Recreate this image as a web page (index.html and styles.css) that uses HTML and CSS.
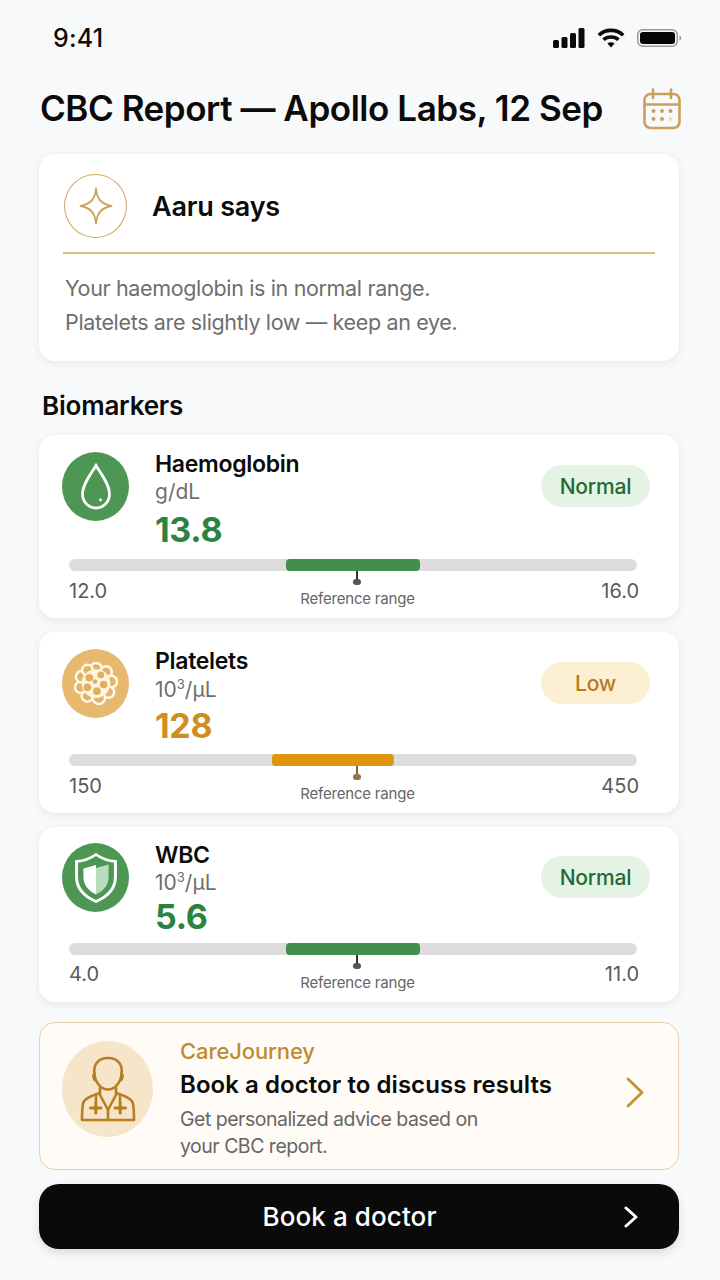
FILE: index.html
```html
<!DOCTYPE html>
<html lang="en">
<head>
<meta charset="utf-8">
<title>CBC Report</title>
<link rel="stylesheet" href="styles.css">
</head>
<body>
<main class="page">
  <header class="status">
    <span class="time">9:41</span>
    <span class="status-icons">
      <svg class="ic-signal" width="32" height="20" viewBox="0 0 32 20"><rect x="0" y="12" width="6" height="8" rx="1.5"/><rect x="8.500" y="9" width="6" height="11" rx="1.500"/><rect x="17" y="5" width="6" height="15" rx="1.500"/><rect x="25.500" y="0" width="6" height="20" rx="1.500"/></svg>
      <svg class="ic-wifi" width="28" height="20" viewBox="0 0 28 20" fill="none" stroke="#0a0a0a" stroke-width="3.600"><path d="M1.800 7.200C8.500 .8 19.500 .8 26.200 7.200"/><path d="M6.500 11.800C10.600 8 17.400 8 21.500 11.800"/><path d="M14 19.500 10.400 15.500C12.400 13.800 15.600 13.800 17.600 15.500Z" fill="#0a0a0a" stroke="none"/></svg>
      <svg class="ic-batt" width="44" height="18" viewBox="0 0 44 18"><rect x=".75" y=".75" width="39.500" height="16.500" rx="5" fill="none" stroke="#9a9a9a" stroke-width="1.500"/><rect x="3" y="3" width="35" height="12" rx="3" fill="#050505"/><path d="M42.500 6.500C43.600 7 44 8 44 9S43.600 11 42.500 11.500Z" fill="#8a8a8a"/></svg>
    </span>
  </header>

  <div class="title-row">
    <h1 class="title">CBC Report — Apollo Labs, 12 Sep</h1>
    <svg class="ic-cal" width="38" height="42" viewBox="0 0 38 42" fill="none" stroke="#cba05a" stroke-width="2.600" stroke-linecap="round"><rect x="1.500" y="6" width="35" height="34" rx="6"/><path d="M1.500 16.500H36.500M10 1.500V10M28 1.500V10"/><g fill="#cba05a" stroke="none"><circle cx="10.500" cy="23" r="2"/><circle cx="19" cy="23" r="2"/><circle cx="27.500" cy="23" r="2"/><circle cx="10.500" cy="31" r="2"/><circle cx="19" cy="31" r="2"/><circle cx="27.500" cy="31" r="2" opacity=".3"/></g></svg>
  </div>

  <section class="card aaru">
    <div class="aaru-head">
      <span class="aaru-badge">
        <svg width="34" height="38" viewBox="0 0 34 38" fill="none" stroke="#cba05a" stroke-width="1.800" stroke-linejoin="round"><path d="M17 1.500C18 12 22 17 32.500 19 22 21 18 26 17 36.500 16 26 12 21 1.500 19 12 17 16 12 17 1.500Z"/></svg>
      </span>
      <h2 class="aaru-name">Aaru says</h2>
    </div>
    <div class="aaru-rule"></div>
    <p class="aaru-text">Your haemoglobin is in normal range.<br>Platelets are slightly low — keep an eye.</p>
  </section>

  <h2 class="section-title">Biomarkers</h2>

  <article class="card bio bio-hb">
    <div class="bio-top">
      <span class="bio-icon green">
        <svg width="32" height="48" viewBox="0 0 32 48" fill="none" stroke="#fff" stroke-width="2.800"><path d="M16 2.500C11 11 2.500 21 2.500 31A13.500 14 0 0 0 29.500 31C29.500 21 21 11 16 2.500Z"/><circle cx="20.500" cy="37" r="1.400" fill="#fff" stroke="none"/></svg>
      </span>
      <div class="bio-text">
        <h3 class="bio-name">Haemoglobin</h3>
        <div class="bio-unit">g/dL</div>
        <div class="bio-value val-green">13.8</div>
      </div>
      <span class="pill pill-green">Normal</span>
    </div>
    <div class="track">
      <div class="fill fill-green" style="left:38.200%;width:23.600%"></div>
      <div class="tick"></div>
    </div>
    <div class="foot"><span>12.0</span><span class="ref">Reference range</span><span class="foot-end">16.0</span></div>
  </article>

  <article class="card bio bio-pl">
    <div class="bio-top">
      <span class="bio-icon gold">
        <svg width="44" height="45" viewBox="0 0 46 46" fill="#e3b468" stroke="#fff8ea" stroke-width="2.600"><circle cx="23" cy="8" r="6.500"/><circle cx="33.500" cy="11" r="6"/><circle cx="39" cy="21" r="6"/><circle cx="36" cy="32" r="6"/><circle cx="26" cy="38" r="6.500"/><circle cx="14" cy="36" r="6"/><circle cx="7" cy="27" r="6"/><circle cx="8" cy="16" r="6"/><circle cx="14" cy="9" r="5.500"/><circle cx="23" cy="23" r="15" stroke="none" fill="#fff4dc"/><g stroke="none" fill="#e0ae60"><circle cx="16" cy="17" r="4"/><circle cx="28" cy="14" r="3.500"/><circle cx="31" cy="24" r="4"/><circle cx="24" cy="31" r="4"/><circle cx="14" cy="27" r="4"/><circle cx="22" cy="21" r="2.500"/></g></svg>
      </span>
      <div class="bio-text">
        <h3 class="bio-name">Platelets</h3>
        <div class="bio-unit">10<sup class="sup">3</sup>/µL</div>
        <div class="bio-value val-gold">128</div>
      </div>
      <span class="pill pill-gold">Low</span>
    </div>
    <div class="track">
      <div class="fill fill-gold" style="left:35.700%;width:21.500%"></div>
      <div class="tick tick-gold"></div>
    </div>
    <div class="foot"><span>150</span><span class="ref">Reference range</span><span class="foot-end">450</span></div>
  </article>

  <article class="card bio bio-wb">
    <div class="bio-top">
      <span class="bio-icon green">
        <svg width="42" height="50" viewBox="0 0 40 50" preserveAspectRatio="none"><path d="M20 1.500C26 6 32 8 38.500 8.500V24C38.500 36 30 44 20 48.500 10 44 1.500 36 1.500 24V8.500C8 8 14 6 20 1.500Z" fill="none" stroke="#fff" stroke-width="2.800"/><path d="M20 12 8 15.500V24C8 32 13 38 20 41.500Z" fill="#fff"/><path d="M20 15 32 11.500V24C32 32 27 38 20 41.500Z" fill="#b9dcbc"/></svg>
      </span>
      <div class="bio-text">
        <h3 class="bio-name">WBC</h3>
        <div class="bio-unit">10<sup class="sup">3</sup>/µL</div>
        <div class="bio-value val-green">5.6</div>
      </div>
      <span class="pill pill-green">Normal</span>
    </div>
    <div class="track">
      <div class="fill fill-green" style="left:38.200%;width:23.600%"></div>
      <div class="tick"></div>
    </div>
    <div class="foot"><span>4.0</span><span class="ref">Reference range</span><span class="foot-end">11.0</span></div>
  </article>

  <section class="care">
    <span class="care-icon">
      <svg width="56" height="66" viewBox="0 0 56 66" fill="none" stroke="#b57f20" stroke-width="2.600" stroke-linecap="round" stroke-linejoin="round"><path d="M14.500 18C13 9 18 2 28 2S43 9 41.500 18C41 26 35 33.500 28 33.500S15 26 14.500 18Z"/><path d="M14.500 17.500C13 18.500 13 23 15.500 24.500M41.500 17.500C43 18.500 43 23 40.500 24.500"/><path d="M20 32V37C14 39 6 41 3.500 46 2 50 2 58 2 64H54C54 58 54 50 52.500 46 50 41 42 39 36 37V32"/><path d="M19 37 28 54 37 37M28 54V64"/><path d="M16 40V47M40 40V47"/><path d="M10.500 52H21M15.800 47V57M35 52H45.500M40.200 47V57" stroke-width="3"/></svg>
    </span>
    <div class="care-body">
      <div class="care-kicker">CareJourney</div>
      <h2 class="care-title">Book a doctor to discuss results</h2>
      <p class="care-sub">Get personalized advice based on<br>your CBC report.</p>
    </div>
    <svg class="care-chev" width="18" height="31" viewBox="0 0 18 31" fill="none" stroke="#c4922e" stroke-width="2.800" stroke-linecap="round" stroke-linejoin="round"><path d="M2 2 16 15.500 2 29"/></svg>
  </section>

  <button class="cta" type="button">
    <span class="cta-label">Book a doctor</span>
    <svg width="14" height="22" viewBox="0 0 14 22" fill="none" stroke="#fff" stroke-width="3" stroke-linecap="round" stroke-linejoin="round"><path d="M2 2 12 11 2 20"/></svg>
  </button>
</main>
</body>
</html>
```

FILE: styles.css
```css
* { box-sizing: border-box; }
html, body { margin: 0; padding: 0; }
body {
  width: 720px;
  height: 1280px;
  overflow: hidden;
  background: #f8f9fb;
  font-family: Inter, "Liberation Sans", sans-serif;
  color: #0b0b0b;
}
h1, h2, h3, p { margin: 0; font: inherit; }
.page { display: flex; flex-direction: column; padding: 0 41px 0 39px; }

.status {
  height: 76px;
  display: flex;
  align-items: center;
  justify-content: space-between;
  margin-right: -2px;
  padding-left: 14px;
}
.time { font-size: 25px; font-weight: 500; letter-spacing: .2px; }
.status-icons { display: flex; align-items: center; gap: 12px; }
.ic-signal { fill: #0a0a0a; }

.title-row {
  height: 64px;
  display: flex;
  align-items: center;
  justify-content: space-between;
  margin-right: -2px;
  padding-left: 1px;
}
.title { font-size: 35px; font-weight: 600; letter-spacing: -.45px; white-space: nowrap; }
.ic-cal { margin-top: 1px; }

.card {
  background: #fff;
  border-radius: 16px;
  box-shadow: 0 2px 8px rgba(30, 40, 60, .09);
}
.aaru { margin-top: 14px; padding: 20px 24px 22px; }
.aaru-head { display: flex; align-items: center; gap: 25px; padding-left: 1px; }
.aaru-badge {
  width: 63px;
  height: 64px;
  border: 1.5px solid #cfa562;
  border-radius: 50%;
  display: flex;
  align-items: center;
  justify-content: center;
}
.aaru-name { font-size: 27px; font-weight: 600; letter-spacing: -.2px; }
.aaru-rule { height: 2px; margin-top: 14px; background: #e2bd80; }
.aaru-text { margin-top: 17px; padding-left: 2px; font-size: 21.5px; letter-spacing: -.35px; line-height: 34px; color: #6e6e6e; }

.section-title { margin-top: 28px; padding-left: 3px; font-size: 26px; font-weight: 600; letter-spacing: -.2px; line-height: 34px; }

.bio { padding: 15px 29px 0 30px; height: 183px; }
.section-title + .bio { margin-top: 12px; }
.bio-pl { margin-top: 14px; height: 181px; }
.bio-wb { margin-top: 14px; height: 175px; padding-top: 14px; }
.bio-top { display: flex; align-items: flex-start; margin-left: -7px; }
.bio-icon {
  flex: none;
  width: 67px;
  height: 69px;
  margin-top: 2px;
  border-radius: 50%;
  display: flex;
  align-items: center;
  justify-content: center;
}
.green { background: #4e9654; }
.gold { background: #e6b96f; }
.bio-text { flex: 1; margin-left: 26px; }
.bio-name { font-size: 23px; font-weight: 600; letter-spacing: -.3px; line-height: 28px; }
.bio-unit { font-size: 21px; line-height: 28px; color: #6f6f6f; }
.sup { font-size: 13px; line-height: 0; }
.bio-value { font-size: 34px; font-weight: 700; letter-spacing: -.3px; line-height: 48px; }
.bio-pl .bio-unit { margin-top: 1px; }
.bio-pl .bio-value { line-height: 43px; margin-bottom: 2px; }
.bio-wb .bio-value { line-height: 39px; margin-bottom: 2px; }
.val-green { color: #2c8341; }
.val-gold { color: #cf8d22; }

.pill {
  flex: none;
  width: 109px;
  height: 42px;
  margin-top: 15px;
  border-radius: 21px;
  display: flex;
  align-items: center;
  justify-content: center;
  font-size: 21px;
  font-weight: 500;
  letter-spacing: -.2px;
}
.pill-green { background: #e4f3e3; color: #1f6a35; }
.pill-gold { background: #fdefd2; color: #b9791d; }

.track {
  position: relative;
  height: 12px;
  margin-top: 5px;
  margin-right: 13px;
  border-radius: 6px;
  background: #dcdcdc;
}
.fill { position: absolute; top: 0; bottom: 0; border-radius: 4px; }
.fill-green { background: #418f4b; }
.fill-gold { background: #e0950f; }
.tick {
  position: absolute;
  left: 287px;
  top: 12px;
  width: 2px;
  height: 8px;
  background: #333;
}
.tick::after {
  content: "";
  position: absolute;
  left: -3px;
  top: 8px;
  width: 8px;
  height: 6px;
  border-radius: 3px;
  background: #555;
}
.tick-gold { background: #8c6324; }
.tick-gold::after { background: #8d7550; }

.foot {
  display: grid;
  grid-template-columns: 1fr auto 1fr;
  margin-right: 11px;
  padding-top: 8px;
  font-size: 20px;
  line-height: 24px;
  color: #5a5a5a;
}
.foot-end { text-align: right; }
.ref { margin: 10px 0 0 7px; font-size: 15px; letter-spacing: -.2px; line-height: 20px; color: #666; }
.bio-wb .foot { padding-top: 7px; }
.bio-wb .ref { margin-top: 11px; }

.care {
  margin-top: 20px;
  height: 148px;
  display: flex;
  align-items: flex-start;
  padding: 0 34px 0 22px;
  background: #fffcf8;
  border: 1.5px solid #e7d1aa;
  border-radius: 16px;
}
.care-icon {
  flex: none;
  width: 91px;
  height: 96px;
  margin-top: 17.5px;
  border-radius: 50%;
  background: #f6e5c8;
  display: flex;
  align-items: center;
  justify-content: center;
}
.care-body { flex: 1; margin: 12.5px 0 0 27px; }
.care-kicker { font-size: 22px; font-weight: 500; letter-spacing: -.1px; line-height: 30px; color: #c08a2e; }
.care-title { margin-top: 2px; font-size: 24px; font-weight: 600; letter-spacing: .06px; line-height: 34px; }
.care-sub { margin-top: 4.5px; font-size: 19.5px; letter-spacing: -.5px; line-height: 27px; color: #666; }
.care-chev { margin-top: 53.5px; }

.cta {
  margin-top: 14px;
  height: 65px;
  display: flex;
  align-items: center;
  gap: 5px;
  padding: 0 41px;
  border: 0;
  border-radius: 20px;
  background: #0a0a0a;
  color: #fff;
  font-family: inherit;
  box-shadow: 0 4px 10px rgba(0, 0, 0, .12);
}
.cta-label { flex: 1; text-align: center; font-size: 26px; font-weight: 500; letter-spacing: .1px; }
```
